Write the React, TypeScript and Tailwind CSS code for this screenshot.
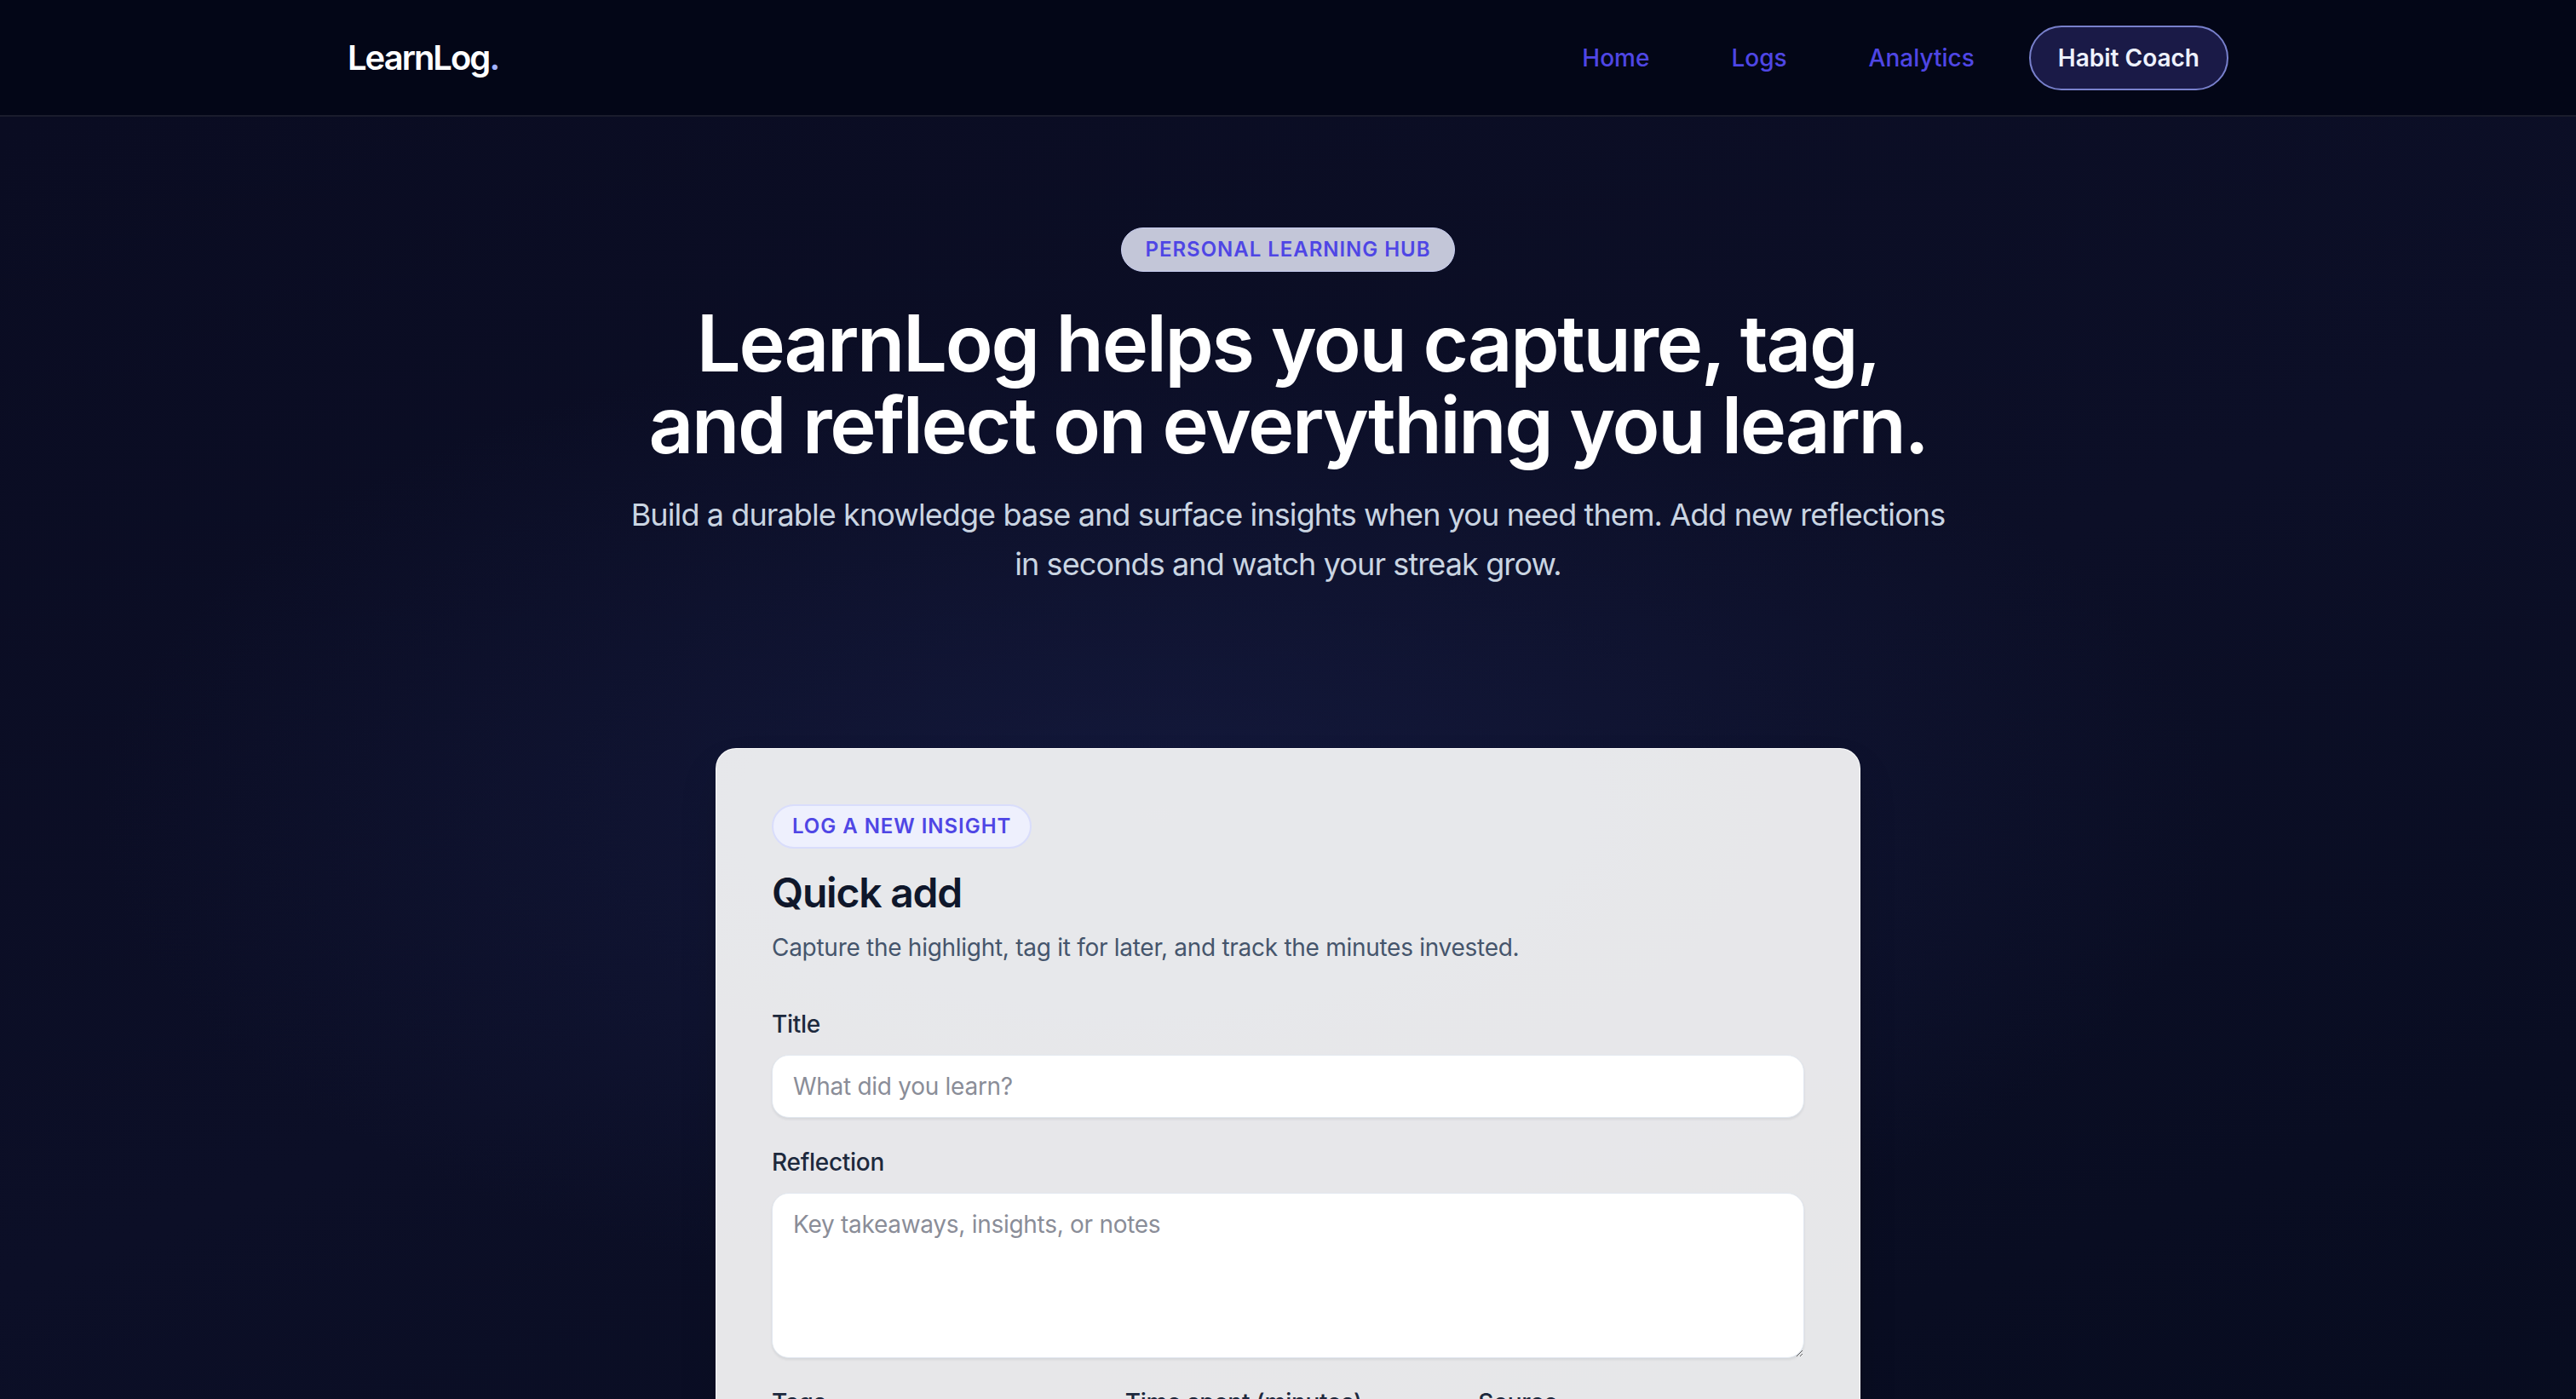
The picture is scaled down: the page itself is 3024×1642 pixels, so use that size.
const navLinks = ["Home", "Logs", "Analytics"];

function Field({ label, children }: { label: string; children: React.ReactNode }) {
  return (
    <label className="block">
      <span className="block text-[28px] font-medium leading-[40px] tracking-[-0.01em] text-slate-800">{label}</span>
      {children}
    </label>
  );
}

const inputClass =
  "mt-4 block w-full rounded-[20px] border border-slate-200 bg-white px-6 py-4 text-[28px] leading-[40px] tracking-[-0.01em] text-slate-900 shadow-[0_2px_3px_rgba(15,23,42,0.08)] outline-none placeholder:text-[#8a8d98]";

export default function App() {
  return (
    <div className="min-h-screen bg-[#080b1f] font-['Inter',sans-serif] text-white antialiased">
      <header className="border-b-2 border-[#1a1c2c] bg-[#030617]">
        <div className="mx-auto flex h-[135px] max-w-[2304px] items-center justify-between px-12">
          <a href="#" className="text-[40px] font-semibold tracking-[-0.05em] text-white">
            LearnLog<span className="text-indigo-300">.</span>
          </a>
          <nav className="flex items-center gap-8 text-[28px] font-medium">
            {navLinks.map((link) => (
              <a key={link} href="#" className="px-8 py-4 leading-[40px] text-[#4f46e5]">
                {link}
              </a>
            ))}
            <a
              href="#"
              className="rounded-full border-2 border-[#7880cc] bg-[#1a1a47] px-8 py-4 font-semibold leading-[40px] text-indigo-50"
            >
              Habit Coach
            </a>
          </nav>
        </div>
      </header>

      <main className="bg-[radial-gradient(ellipse_55%_40%_at_45%_42%,rgba(28,36,84,0.45),transparent_75%),linear-gradient(160deg,#0a0c22,#0c0f27_45%,#060b1d_100%)] px-12 pb-40">
        <section className="mx-auto max-w-[1600px] pt-[130px] text-center">
          <span className="inline-flex h-[52px] items-center rounded-full border border-[#c9cef2] bg-[#c3c6d8] px-7 text-[24px] font-semibold uppercase tracking-[0.04em] text-[#4f46e5]">
            Personal learning hub
          </span>
          <h1 className="mt-9 text-balance text-[92px] font-semibold leading-[96px] tracking-tight text-white">
            LearnLog helps you capture, tag, and reflect on everything you learn.
          </h1>
          <p className="mx-auto mt-7 max-w-[1560px] text-[36px] leading-[58px] tracking-tight text-slate-300">
            Build a durable knowledge base and surface insights when you need them. Add new reflections in seconds and
            watch your streak grow.
          </p>
        </section>

        <section className="mx-auto mt-[187px] max-w-[1344px] rounded-[24px] border border-white/80 bg-white/90 p-[65px] text-slate-900 shadow-2xl">
          <span className="inline-flex rounded-full border-2 border-[#d9ddfb] bg-[#eef0fd] px-[22px] py-[8px] text-[24px] font-semibold uppercase leading-[32px] tracking-[0.04em] text-[#4f46e5]">
            Log a new insight
          </span>
          <h2 className="mt-5 text-[48px] font-semibold leading-[64px] tracking-tight text-slate-900">Quick add</h2>
          <p className="mt-3 text-[28px] leading-[40px] tracking-[-0.01em] text-slate-600">
            Capture the highlight, tag it for later, and track the minutes invested.
          </p>

          <form className="mt-[50px] flex flex-col gap-8">
            <Field label="Title">
              <input type="text" placeholder="What did you learn?" className={inputClass} />
            </Field>
            <Field label="Reflection">
              <textarea rows={4} placeholder="Key takeaways, insights, or notes" className={inputClass} />
            </Field>
            <div className="grid grid-cols-3 gap-8">
              <Field label="Tags">
                <input type="text" placeholder="e.g. react, design" className={inputClass} />
              </Field>
              <Field label="Time spent (minutes)">
                <input type="number" placeholder="30" className={inputClass} />
              </Field>
              <Field label="Source">
                <input type="text" placeholder="Book, course, article" className={inputClass} />
              </Field>
            </div>
            <div className="flex justify-end">
              <button
                type="button"
                className="rounded-full bg-indigo-600 px-10 py-4 text-[28px] font-semibold leading-[40px] text-white"
              >
                Save entry
              </button>
            </div>
          </form>
        </section>
      </main>
    </div>
  );
}
